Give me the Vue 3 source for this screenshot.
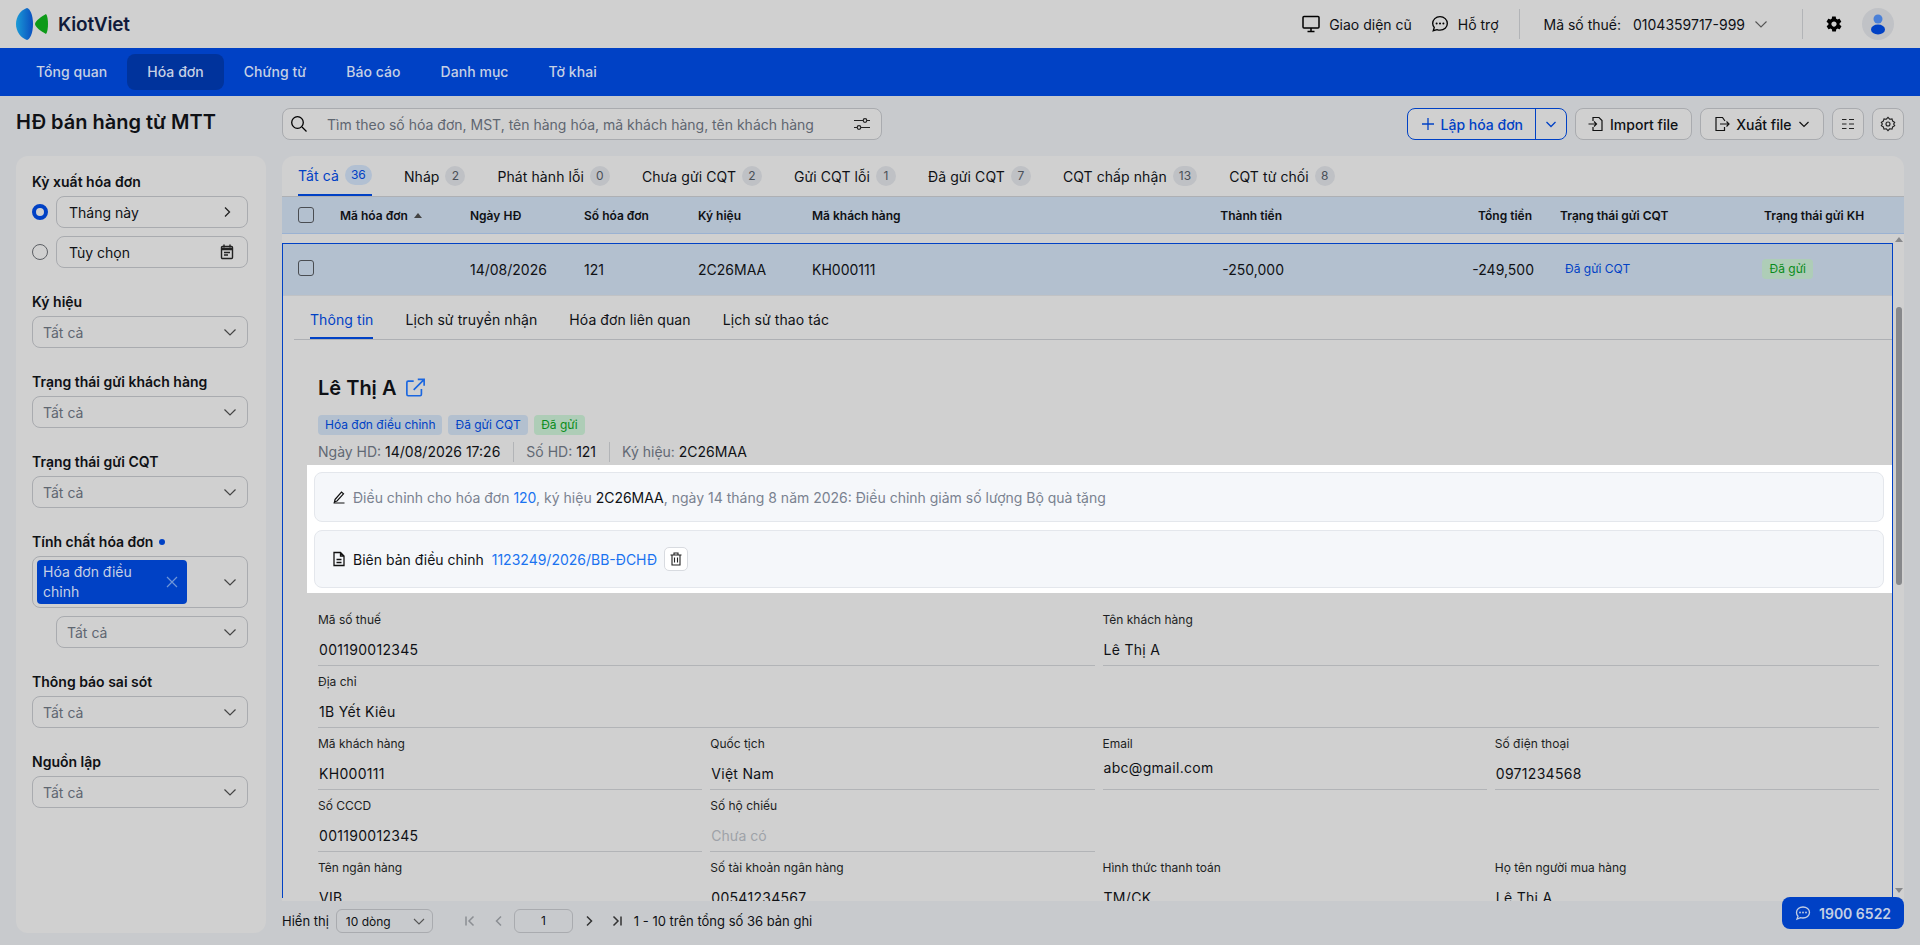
<script setup>
const menu = ["Tổng quan", "Hóa đơn", "Chứng từ", "Báo cáo", "Danh mục", "Tờ khai"];
const tabs = [
  ["Tất cả", 36], ["Nháp", 2], ["Phát hành lỗi", 0], ["Chưa gửi CQT", 2],
  ["Gửi CQT lỗi", 1], ["Đã gửi CQT", 7], ["CQT chấp nhận", 13], ["CQT từ chối", 8]
];
const detailTabs = ["Thông tin", "Lịch sử truyền nhận", "Hóa đơn liên quan", "Lịch sử thao tác"];
const filters1 = ["Ký hiệu", "Trạng thái gửi khách hàng", "Trạng thái gửi CQT"];
const filters2 = ["Thông báo sai sót", "Nguồn lập"];
const rows = [
  { cls: "two", cells: [["Mã số thuế", "001190012345"], ["Tên khách hàng", "Lê Thị A"]] },
  { cls: "one", cells: [["Địa chỉ", "1B Yết Kiêu"]] },
  { cls: "four", cells: [["Mã khách hàng", "KH000111"], ["Quốc tịch", "Việt Nam"], ["Email", "abc@gmail.com"], ["Số điện thoại", "0971234568"]] },
  { cls: "four", cells: [["Số CCCD", "001190012345"], ["Số hộ chiếu", "Chưa có", true]] },
  { cls: "four", cells: [["Tên ngân hàng", "VIB"], ["Số tài khoản ngân hàng", "00541234567"], ["Hình thức thanh toán", "TM/CK"], ["Họ tên người mua hàng", "Lê Thị A"]] }
];
</script>

<template>
  <div class="page">
    <header class="top">
      <div class="logo">
        <svg width="34" height="34" viewBox="0 0 34 34">
          <defs>
            <linearGradient id="lg" x1="0" x2="1" y1="0" y2="0">
              <stop offset="0" stop-color="#1a9ad6" />
              <stop offset="1" stop-color="#0a4fc0" />
            </linearGradient>
          </defs>
          <path d="M11 1C5 3 0 9 0 17s5 14 11 16c3-.5 6-7 6-16S14 1.500 11 1z" fill="url(#lg)" />
          <path d="M30 7C26 9 19 14 19 17s7 8 11 10c1.500-2 2-6 2-10s-.5-8-2-10z" fill="#0d9a18" />
        </svg>
        <span>KiotViet</span>
      </div>
      <div class="top-right">
        <span class="top-link">
          <svg width="18" height="18" viewBox="0 0 18 18" fill="none" stroke="#000" stroke-width="1.500"><rect x="1" y="1.500" width="16" height="11.500" rx="1" /><path d="M5.500 16.500h7M9 13v3.500" /></svg>
          Giao diện cũ
        </span>
        <span class="top-link">
          <svg width="18" height="18" viewBox="0 0 16 16" fill="none" stroke="#000" stroke-width="1.200"><path d="M8 1.500c3.700 0 6.500 2.600 6.500 6s-2.800 6-6.500 6c-1 0-1.900-.2-2.700-.5L2 14l.9-3C2 9.900 1.500 8.800 1.500 7.500c0-3.400 2.800-6 6.500-6z" /><path d="M5 7.500h.01M8 7.500h.01M11 7.500h.01" stroke-width="1.800" stroke-linecap="round" /></svg>
          Hỗ trợ
        </span>
        <i class="vline first"></i>
        <span class="tax">Mã số thuế:<b>0104359717-999</b>
          <svg width="12" height="12" viewBox="0 0 12 12" fill="none" stroke="#555" stroke-width="1.100"><path d="M.5 3.500L6 9l5.500-5.500" /></svg>
        </span>
        <i class="vline second"></i>
        <svg class="gear" width="18" height="18" viewBox="0 0 24 24" fill="#000"><path d="M19.400 13c.1-.3.1-.7.100-1s0-.7-.1-1l2.100-1.600c.2-.2.200-.4.100-.6l-2-3.500c-.1-.2-.4-.3-.6-.2l-2.500 1c-.5-.4-1.100-.7-1.700-1l-.4-2.600c0-.3-.2-.5-.5-.5h-4c-.3 0-.5.200-.5.400l-.4 2.700c-.6.200-1.200.6-1.700 1l-2.500-1c-.2-.1-.5 0-.6.200l-2 3.500c-.1.200-.1.400.1.600L4.600 11c-.1.300-.1.700-.1 1s0 .7.100 1l-2.100 1.600c-.2.200-.2.400-.1.600l2 3.500c.1.200.4.300.6.200l2.500-1c.5.400 1.100.7 1.700 1l.4 2.600c0 .3.200.5.500.5h4c.3 0 .5-.2.500-.4l.4-2.700c.6-.2 1.200-.6 1.700-1l2.500 1c.2.100.5 0 .6-.2l2-3.500c.1-.2.100-.4-.1-.6L19.400 13zM12 15.500c-1.900 0-3.500-1.600-3.500-3.500s1.600-3.500 3.500-3.500 3.500 1.600 3.500 3.500-1.600 3.500-3.500 3.500z" /></svg>
        <span class="avatar">
          <svg width="20" height="24" viewBox="0 0 20 24"><circle cx="10" cy="7" r="4.500" fill="#4a80d8" /><ellipse cx="10" cy="17.500" rx="7" ry="5" fill="#0041c5" /></svg>
        </span>
      </div>
    </header>

    <nav class="menu">
      <a v-for="m in menu" :key="m" :class="{ active: m === 'Hóa đơn' }">{{ m }}</a>
    </nav>

    <div class="toolbar">
      <h1>HĐ bán hàng từ MTT</h1>
      <div class="search">
        <svg width="18" height="18" viewBox="0 0 18 18" fill="none" stroke="#000" stroke-width="1.300"><circle cx="7.500" cy="7.500" r="5.800" /><path d="M12 12l4.500 4.500" /></svg>
        <span class="ph">Tìm theo số hóa đơn, MST, tên hàng hóa, mã khách hàng, tên khách hàng</span>
        <svg width="18" height="18" viewBox="0 0 18 18" fill="none" stroke="#222" stroke-width="1.200"><path d="M1 5.500h9M14 5.500h3M1 12.500h3M8 12.500h9" /><circle cx="12" cy="5.500" r="1.800" /><circle cx="6" cy="12.500" r="1.800" /></svg>
      </div>
      <div class="actions">
        <div class="split">
          <span class="split-main">
            <svg width="14" height="14" viewBox="0 0 14 14" stroke="#0041c5" stroke-width="1.300"><path d="M7 1v12M1 7h12" /></svg>
            Lập hóa đơn
          </span>
          <span class="split-arrow">
            <svg width="12" height="12" viewBox="0 0 12 12" fill="none" stroke="#0041c5" stroke-width="1.300"><path d="M1.500 4l4.500 4.500L10.500 4" /></svg>
          </span>
        </div>
        <button class="btn">
          <svg width="16" height="16" viewBox="0 0 16 16" fill="none" stroke="#111" stroke-width="1.200"><path d="M5 5V1.500h6l3 3V14.500H5V11" /><path d="M.5 8h8M6 5.500L8.500 8 6 10.500" /></svg>
          Import file
        </button>
        <button class="btn export">
          <svg width="16" height="16" viewBox="0 0 16 16" fill="none" stroke="#111" stroke-width="1.200"><path d="M11 5L8.500 1.500H2v13h8.500V11" /><path d="M6 8h9M12.500 5.500L15 8l-2.500 2.500" /></svg>
          Xuất file
          <svg width="12" height="12" viewBox="0 0 12 12" fill="none" stroke="#111" stroke-width="1.200"><path d="M1.500 4l4.500 4.500L10.500 4" /></svg>
        </button>
        <button class="btn square">
          <svg width="14" height="14" viewBox="0 0 14 14" stroke="#222" stroke-width="1.200"><path d="M1 2.500h4.500M8 2.500h5M1 7h4.500M8 7h5M1 11.500h4.500M8 11.500h5" /></svg>
        </button>
        <button class="btn square">
          <svg width="16" height="16" viewBox="0 0 24 24" fill="none" stroke="#222" stroke-width="1.700"><circle cx="12" cy="12" r="3" /><path d="M12 2l2.500 2.800 3.500-.4 1 3.200 3 1.900L20.500 12l1.500 2.500-3 1.900-1 3.200-3.500-.4L12 22l-2.500-2.800-3.500.4-1-3.200-3-1.900L3.500 12 2 9.500l3-1.900 1-3.200 3.500.4z" /></svg>
        </button>
      </div>
    </div>

    <div class="body">
      <aside class="filters">
        <div class="flabel">Kỳ xuất hóa đơn</div>
        <div class="radio-row">
          <i class="radio on"></i>
          <div class="select wide">Tháng này
            <svg width="12" height="12" viewBox="0 0 12 12" fill="none" stroke="#222" stroke-width="1.300"><path d="M3 1.500L7.500 6 3 10.500" /></svg>
          </div>
        </div>
        <div class="radio-row second">
          <i class="radio"></i>
          <div class="select wide">Tùy chọn
            <svg width="14" height="16" viewBox="0 0 14 16" fill="none" stroke="#222" stroke-width="1.400"><rect x="1.500" y="2.500" width="11" height="12" rx="1" /><path d="M1.500 5h11" stroke-width="2.500" /><path d="M4 8.500h6M4 11h4M4 .5v3M10 .5v3" /></svg>
          </div>
        </div>

        <div v-for="f in filters1" :key="f" class="fgroup">
          <div class="flabel">{{ f }}</div>
          <div class="select muted">Tất cả
            <svg width="14" height="14" viewBox="0 0 14 14" fill="none" stroke="#444" stroke-width="1.200"><path d="M1.500 4.500L7 10l5.500-5.500" /></svg>
          </div>
        </div>

        <div class="fgroup">
          <div class="flabel">Tính chất hóa đơn <i class="dot"></i></div>
          <div class="multi">
            <div class="chip">
              <span>Hóa đơn điều chỉnh</span>
              <svg width="12" height="12" viewBox="0 0 12 12" stroke="#6f96d8" stroke-width="1.200"><path d="M1 1l10 10M11 1L1 11" /></svg>
            </div>
            <svg width="14" height="14" viewBox="0 0 14 14" fill="none" stroke="#444" stroke-width="1.200"><path d="M1.500 4.500L7 10l5.500-5.500" /></svg>
          </div>
          <div class="select muted sub">Tất cả
            <svg width="14" height="14" viewBox="0 0 14 14" fill="none" stroke="#444" stroke-width="1.200"><path d="M1.500 4.500L7 10l5.500-5.500" /></svg>
          </div>
        </div>

        <div v-for="f in filters2" :key="f" class="fgroup">
          <div class="flabel">{{ f }}</div>
          <div class="select muted">Tất cả
            <svg width="14" height="14" viewBox="0 0 14 14" fill="none" stroke="#444" stroke-width="1.200"><path d="M1.500 4.500L7 10l5.500-5.500" /></svg>
          </div>
        </div>
      </aside>

      <main class="main">
        <div class="card">
          <div class="tabs">
            <div v-for="(t, i) in tabs" :key="t[0]" class="tab" :class="{ active: i === 0 }">
              {{ t[0] }}<span class="count" :class="{ big: t[1] > 9 }">{{ t[1] }}</span>
            </div>
          </div>
          <div class="thead">
            <span class="c-check"><i class="check"></i></span>
            <span class="c-code">Mã hóa đơn <em class="sort"></em></span>
            <span class="c-date">Ngày HĐ</span>
            <span class="c-no">Số hóa đơn</span>
            <span class="c-sign">Ký hiệu</span>
            <span class="c-cust">Mã khách hàng</span>
            <span class="c-amt">Thành tiền</span>
            <span class="c-total">Tổng tiền</span>
            <span class="c-cqt">Trạng thái gửi CQT</span>
            <span class="c-kh">Trạng thái gửi KH</span>
          </div>
          <div class="tbody">
            <div class="scroll">
              <div class="selected">
                <div class="trow">
                  <span class="c-check"><i class="check"></i></span>
                  <span class="c-code"></span>
                  <span class="c-date">14/08/2026</span>
                  <span class="c-no">121</span>
                  <span class="c-sign">2C26MAA</span>
                  <span class="c-cust">KH000111</span>
                  <span class="c-amt">-250,000</span>
                  <span class="c-total">-249,500</span>
                  <span class="c-cqt"><em class="tag blue plain">Đã gửi CQT</em></span>
                  <span class="c-kh"><em class="tag green">Đã gửi</em></span>
                </div>
                <div class="dtabs">
                  <a v-for="(d, i) in detailTabs" :key="d" :class="{ active: i === 0 }">{{ d }}</a>
                </div>
                <div class="detail">
                  <h2>Lê Thị A
                    <svg width="21" height="20" viewBox="0 0 22 22" fill="none" stroke="#1a66e0" stroke-width="1.800"><path d="M9 3.500H3a1.500 1.500 0 0 0-1.500 1.500v13A1.500 1.500 0 0 0 3 19.500h13a1.500 1.500 0 0 0 1.500-1.500v-6" /><path d="M9 13L20 2M13.500 1.500H20.500V8.500" /></svg>
                  </h2>
                  <div class="tags">
                    <em class="tag blue">Hóa đơn điều chỉnh</em>
                    <em class="tag blue">Đã gửi CQT</em>
                    <em class="tag green">Đã gửi</em>
                  </div>
                  <div class="meta">
                    <span>Ngày HD: <b>14/08/2026 17:26</b></span>
                    <span>Số HD: <b>121</b></span>
                    <span>Ký hiệu: <b>2C26MAA</b></span>
                  </div>
                  <div class="spot">
                    <div class="note">
                      <svg width="14" height="14" viewBox="0 0 14 14" fill="none" stroke="#111" stroke-width="1.200"><path d="M3 9.500L9.500 2l2 1.800L5 11l-2.500.8zM1.500 13h11" /></svg>
                      <span class="gray">Điều chỉnh cho hóa đơn <a>120</a>, ký hiệu <b>2C26MAA</b>, ngày 14 tháng 8 năm 2026: Điều chỉnh giảm số lượng Bộ quà tặng</span>
                    </div>
                    <div class="note doc">
                      <svg width="14" height="16" viewBox="0 0 14 16" fill="none" stroke="#111" stroke-width="1.300"><path d="M2 1.500h6.500L12 5v9.500H2zM8.500 1.500V5H12M4.500 8.500h5M4.500 11.500h5" /></svg>
                      <span class="dark">Biên bản điều chỉnh</span>
                      <a>1123249/2026/BB-ĐCHĐ</a>
                      <span class="trash">
                        <svg width="12" height="14" viewBox="0 0 12 14" fill="none" stroke="#222" stroke-width="1.100"><path d="M.5 3h11M4 3V1h4v2M2 3v10h8V3M4.500 5.500v5M7.500 5.500v5" /></svg>
                      </span>
                    </div>
                  </div>
                  <div v-for="(r, ri) in rows" :key="ri" class="frow" :class="r.cls">
                    <div v-for="c in r.cells" :key="c[0]" class="field" :class="{ email: c[0] === 'Email' }">
                      <label>{{ c[0] }}</label>
                      <div class="val" :class="{ none: c[2] }">{{ c[1] }}</div>
                    </div>
                  </div>
                </div>
              </div>
            </div>
            <div class="sbar"><i class="up"></i><i class="thumb"></i><i class="down"></i></div>
          </div>
        </div>
        <div class="pager">
          <span>Hiển thị</span>
          <div class="psize">10 dòng
            <svg width="12" height="12" viewBox="0 0 12 12" fill="none" stroke="#555" stroke-width="1.100"><path d="M1 4l5 5 5-5" /></svg>
          </div>
          <div class="pnav">
            <svg width="12" height="12" viewBox="0 0 12 12" fill="none" stroke="#8b8e93" stroke-width="1.500"><path d="M2 1.500v9M9.500 1.500L5 6l4.500 4.500" /></svg>
            <svg class="p2" width="12" height="12" viewBox="0 0 12 12" fill="none" stroke="#8b8e93" stroke-width="1.500"><path d="M8 1.500L3.500 6 8 10.500" /></svg>
            <div class="pinput">1</div>
            <svg width="12" height="12" viewBox="0 0 12 12" fill="none" stroke="#333" stroke-width="1.500"><path d="M4 1.500L8.500 6 4 10.500" /></svg>
            <svg class="p5" width="12" height="12" viewBox="0 0 12 12" fill="none" stroke="#333" stroke-width="1.500"><path d="M2.500 1.500L7 6l-4.500 4.500M10 1.500v9" /></svg>
          </div>
          <span>1 - 10 trên tổng số 36 bản ghi</span>
        </div>
      </main>
    </div>

    <div class="hotline">
      <svg width="16" height="16" viewBox="0 0 16 16" fill="none" stroke="#c4cfe4" stroke-width="1.300"><path d="M8 2c3.600 0 6.500 2.400 6.500 5.500S11.600 13 8 13c-.9 0-1.700-.1-2.500-.4L2 14l1-2.800C2 10.200 1.500 8.900 1.500 7.500 1.500 4.400 4.400 2 8 2z" /><path d="M5 7.500h.01M8 7.500h.01M11 7.500h.01" stroke-width="1.800" stroke-linecap="round" /></svg>
      1900 6522
    </div>
  </div>
</template>

<style>
html, body { margin: 0; height: 100%; overflow: hidden; }
</style>

<style scoped>
.page {
  position: relative;
  width: 1920px;
  height: 945px;
  overflow: hidden;
  background: #c8cacd;
  font-family: Inter, "Noto Sans", sans-serif;
  font-size: 14px;
  color: #0f1115;
  display: flex;
  flex-direction: column;
}
.top {
  height: 48px;
  flex: none;
  background: #d0d0d0;
  display: flex;
  align-items: center;
  justify-content: space-between;
  padding: 0 26px 0 16px;
  box-sizing: border-box;
}
.logo { display: flex; align-items: center; gap: 8px; font-size: 19px; font-weight: 600; color: #101a3a; letter-spacing: -.2px; }
.top-right { display: flex; align-items: center; }
.top-link { display: flex; align-items: center; gap: 9px; margin-right: 19px; }
.top-link + .top-link { margin-right: 0; }
.vline { width: 1px; height: 30px; background: #b2b4b7; }
.vline.first { margin: 0 24px 0 20px; }
.vline.second { margin: 0 22px 0 35px; }
.tax { display: flex; align-items: center; }
.tax b { font-weight: 400; margin: 0 10px 0 12px; }
.avatar {
  width: 32px; height: 32px; margin-left: 19px; border-radius: 50%;
  background: #c0c2c6;
  display: flex; align-items: center; justify-content: center;
}
.menu {
  height: 48px; flex: none; background: #0041c5;
  display: flex; align-items: center; padding: 0 16px;
  box-sizing: border-box;
}
.menu a { height: 36px; line-height: 36px; padding: 0 20px; font-size: 14px; font-weight: 500; letter-spacing: .05px; border-radius: 8px; color: #c6d0e4; }
.menu a.active { background: #00339c; }
.toolbar {
  height: 60px; flex: none; box-sizing: border-box; display: flex; align-items: flex-start; padding: 12px 16px 0;
}
h1 { margin: 0; width: 266px; font-size: 20px; font-weight: 600; line-height: 28px; }
.search {
  width: 600px; height: 32px; box-sizing: border-box; background: #d0d0d0;
  border: 1px solid #a9abaf; border-radius: 8px;
  display: flex; align-items: center; padding: 0 10px 0 7px;
}
.ph { flex: 1; padding-left: 19px; color: #5f6670; }
.actions { margin-left: auto; display: flex; gap: 8px; }
.split {
  display: flex; height: 32px; box-sizing: border-box; border: 1px solid #0041c5; border-radius: 8px;
  color: #0041c5; font-weight: 500; background: #d0d0d0;
}
.split-main { width: 128px; box-sizing: border-box; display: flex; align-items: center; gap: 6px; padding-left: 13px; border-right: 1px solid #0041c5; }
.split-arrow { width: 30px; display: flex; align-items: center; justify-content: center; }
.btn {
  height: 32px; box-sizing: border-box; border: 1px solid #a9abaf; border-radius: 8px; background: #d0d0d0;
  display: flex; align-items: center; gap: 6px; padding: 0 12.500px;
  font: 500 14px Inter, sans-serif; color: #0f1115;
}
.btn.export { padding: 0 13.500px; }
.btn.square { width: 32px; padding: 0; justify-content: center; }
.body { flex: 1; min-height: 0; display: flex; gap: 16px; padding-left: 16px; }
.filters {
  width: 250px; height: 777px; flex: none; box-sizing: border-box;
  background: #d0d0d0; border-radius: 12px; padding: 16px 18px 0 16px;
}
.flabel { font-weight: 600; line-height: 20px; height: 20px; margin-bottom: 4px; white-space: nowrap; }
.dot { display: inline-block; width: 6px; height: 6px; border-radius: 50%; background: #0041c5; vertical-align: 2px; margin-left: 2px; }
.radio-row { display: flex; align-items: center; gap: 8px; }
.radio-row.second { margin-top: 8px; }
.radio { width: 14px; height: 14px; border: 1px solid #5c5f64; border-radius: 50%; flex: none; }
.radio.on { border: 4px solid #0041c5; width: 8px; height: 8px; background: #d0d0d0; }
.select {
  flex: 1; height: 32px; box-sizing: border-box; background: #d0d0d0; border: 1px solid #a9abaf; border-radius: 8px;
  display: flex; align-items: center; justify-content: space-between; padding: 0 10px;
}
.select.wide { padding: 0 13px 0 12px; }
.select.muted { color: #5f6670; }
.fgroup { margin-top: 24px; }
.multi {
  height: 52px; box-sizing: border-box; border: 1px solid #a9abaf; border-radius: 8px; background: #d0d0d0;
  display: flex; align-items: center; justify-content: space-between; padding: 0 10px 0 4px;
}
.chip {
  width: 150px; height: 44px; box-sizing: border-box; background: #0041c5; color: #c6d0e4; border-radius: 4px;
  display: flex; align-items: center; justify-content: space-between; padding: 0 9px 0 6px; line-height: 20px;
}
.chip span { width: 110px; }
.sub { margin: 8px 0 0 24px; }
.main { flex: 1; min-width: 0; display: flex; flex-direction: column; }
.card {
  width: 1622px; height: 745px; flex: none; display: flex; flex-direction: column; background: #d0d0d0;
  border-radius: 12px 12px 0 0; overflow: hidden;
}
.tabs { height: 41px; flex: none; box-sizing: border-box; display: flex; padding-left: 16px; gap: 32px; border-bottom: 1px solid #aeb0b4; letter-spacing: .08px; }
.tab { height: 40px; box-sizing: border-box; display: flex; align-items: center; gap: 6px; }
.tab.active { color: #0041c5; border-bottom: 2px solid #0041c5; }
.count {
  min-width: 12px; height: 20px; line-height: 20px; padding: 0 4px; border-radius: 10px; background: #bfc1c5;
  text-align: center; font-size: 12px; color: #4a5058;
}
.count.big { padding: 0 6px; }
.tab.active .count { background: #b2c0d2; color: #0041c5; }
.thead, .trow { display: flex; align-items: center; }
.thead {
  height: 37px; flex: none; background: #b3c0cf; border-bottom: 1px solid #9bb2d2;
  font-weight: 600; font-size: 12px; box-sizing: border-box;
}
.trow { height: 52px; background: #b3c0cf; border-bottom: 1px solid #c0c2c5; box-sizing: border-box; }
.c-check { width: 58px; padding-left: 16px; box-sizing: border-box; flex: none; display: flex; }
.c-code { width: 130px; flex: none; }
.c-date, .c-no, .c-sign { width: 114px; flex: none; }
.c-cust { width: 300px; flex: none; }
.c-amt { width: 170px; flex: none; text-align: right; }
.c-total { width: 250px; flex: none; text-align: right; }
.c-cqt { width: 232px; flex: none; padding-left: 28px; box-sizing: border-box; }
.c-kh { flex: 1; }
.trow .c-check { width: 57px; padding-left: 15px; }
.trow .c-amt { width: 172px; }
.trow .c-cqt { width: 228px; padding-left: 31px; }
.trow .check { margin-top: -3px; }
.check { width: 14px; height: 14px; border: 1px solid #4a4d52; border-radius: 3px; display: block; }
.sort { display: inline-block; border: 4.500px solid transparent; border-bottom: 5px solid #444; border-top: 0; margin-left: 3px; vertical-align: 2px; }
.tbody { flex: 1; min-height: 0; display: flex; }
.scroll { flex: 1; min-width: 0; padding-top: 9px; }
.selected { border: 1px solid #0041c5; border-bottom: 0; box-sizing: border-box; height: 655px; }
.sbar { width: 11px; flex: none; display: flex; flex-direction: column; align-items: center; }
.sbar .up { margin-top: 3px; border: 4px solid transparent; border-bottom: 5px solid #87888b; border-top: 0; }
.sbar .thumb { margin-top: 65px; width: 6px; height: 278px; border-radius: 3px; background: #87888b; }
.sbar .down { margin-top: auto; margin-bottom: 8px; border: 4px solid transparent; border-top: 5px solid #87888b; border-bottom: 0; }
.tag {
  font-style: normal; display: inline-block; height: 20px; line-height: 20px; padding: 0 7px; border-radius: 4px; font-size: 12px;
}
.tag.blue { color: #0041c5; background: #b3c0cf; }
.tag.green { color: #0a8c1a; background: #aecdb7; padding: 0 7.500px; }
.tag.plain { background: transparent; padding: 0; }
.c-kh .tag, .c-cqt .tag { margin-top: -2px; vertical-align: top; }
.dtabs { height: 44px; margin-left: 11px; padding-left: 16px; display: flex; gap: 32px; border-bottom: 1px solid #aeb0b4; box-sizing: border-box; letter-spacing: .08px; }
.dtabs a { height: 43px; line-height: 48px; }
.dtabs a.active { color: #0041c5; border-bottom: 2px solid #0041c5; box-sizing: border-box; }
.detail { padding: 34px 13px 0 35px; }
h2 { margin: 0; font-size: 20px; font-weight: 600; line-height: 28px; display: flex; align-items: center; gap: 9px; }
.tags { margin-top: 13px; display: flex; gap: 6px; }
.meta { margin-top: 7px; display: flex; color: #626974; height: 20px; line-height: 20px; }
.meta b { font-weight: 400; color: #0f1115; }
.meta span { padding-right: 12.500px; margin-right: 12.500px; border-right: 1px solid #b2b4b7; }
.meta span:last-child { border: 0; }
.spot {
  margin: 3px -13px 0 -11px; background: #fff; padding: 7px 8px 5px 7px;
  display: flex; flex-direction: column; gap: 8px;
}
.note {
  height: 50px; box-sizing: border-box; background: #f5f7fa; border: 1px solid #e4e7ec; border-radius: 8px;
  display: flex; align-items: center; gap: 7px; padding: 0 17px;
}
.note.doc { height: 58px; }
.gray { color: #7a8290; }
.gray b { color: #0f1115; font-weight: 400; }
.note a { color: #1a73f0; }
.dark { margin-right: 1px; }
.trash {
  width: 24px; height: 24px; box-sizing: border-box; border: 1px solid #d8dbe0; border-radius: 5px;
  display: flex; align-items: center; justify-content: center; background: #fff;
}
.frow { display: grid; column-gap: 8px; margin-top: 8px; height: 54px; }
.frow.two { grid-template-columns: 1fr 1fr; margin-top: 19px; }
.frow.one { grid-template-columns: 1fr; }
.frow.four { grid-template-columns: 1fr 1fr 1fr 1fr; }
.field { border-bottom: 1px solid #b2b4b7; box-sizing: border-box; height: 54px; }
.field label { display: block; font-size: 12px; color: #1c1e22; line-height: 16px; }
.val { line-height: 20px; margin-top: 12px; letter-spacing: .3px; padding-left: 1px; }
.field.email .val { margin-top: 6px; }
.val.none { color: #9ea2a8; letter-spacing: 0; }
.pager { height: 32px; margin-top: 4px; display: flex; align-items: center; font-size: 13px; }
.psize {
  width: 97px; height: 24px; margin-left: 7px; box-sizing: border-box; border: 1px solid #a9abaf; border-radius: 6px;
  display: flex; align-items: center; justify-content: space-between; padding: 0 7px 0 9px; font-size: 12px;
}
.pnav { display: flex; align-items: center; margin: 0 11px 0 31px; }
.p2 { margin-left: 17px; margin-right: 9px; }
.p5 { margin-left: 16px; }
.pinput { width: 59px; height: 24px; line-height: 22px; box-sizing: border-box; border: 1px solid #a9abaf; border-radius: 6px; text-align: center; font-size: 12px; margin-right: 10px; }
.hotline {
  position: absolute; right: 16px; bottom: 16px; width: 122px; height: 32px; box-sizing: border-box;
  background: #0041c5; color: #c4cfe4; border-radius: 8px;
  display: flex; align-items: center; gap: 8px; padding-left: 13px; font-weight: 600;
}
</style>
